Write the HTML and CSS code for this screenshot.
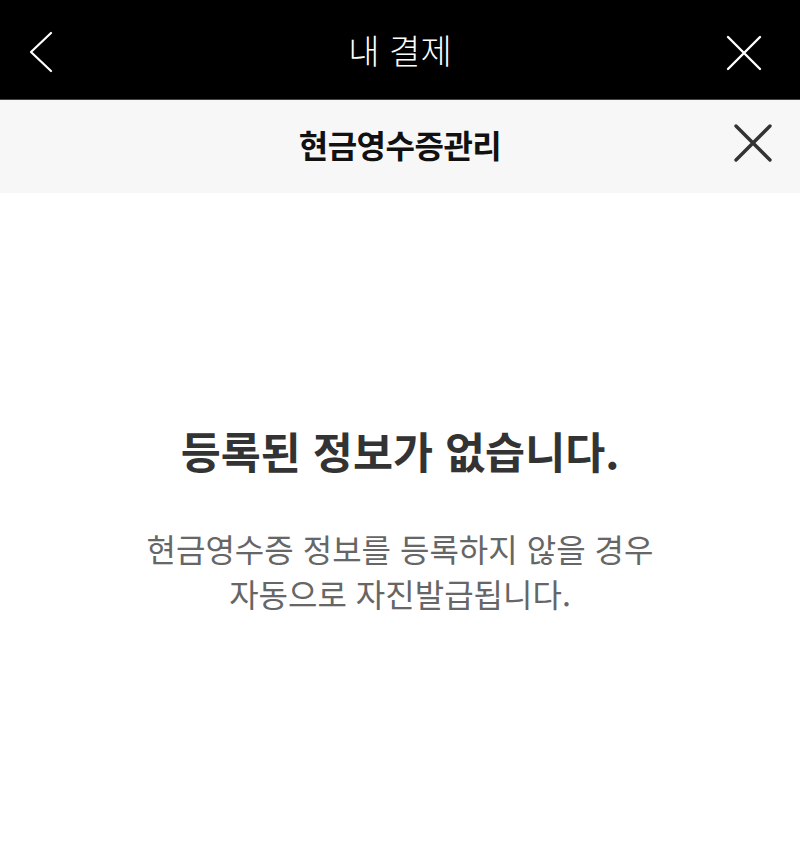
FILE: index.html
```html
<!DOCTYPE html>
<html lang="ko">
<head>
  <meta charset="UTF-8">
  <meta name="viewport" content="width=device-width, initial-scale=1.0">
  <title>내 결제</title>
  <link rel="stylesheet" href="styles.css">
</head>
<body>
  <header class="top-bar">
    <button class="icon-btn back-btn" aria-label="뒤로">
      <svg width="40" height="50" viewBox="0 0 40 50">
        <polyline points="21,4 1,23 21,42" fill="none" stroke="#fff" stroke-width="2.2" stroke-linecap="round" stroke-linejoin="round"/>
      </svg>
    </button>
    <h1 class="top-title">내 결제</h1>
    <button class="icon-btn close-btn" aria-label="닫기">
      <svg width="40" height="40" viewBox="0 0 40 40">
        <path d="M4 4 L36 36 M36 4 L4 36" fill="none" stroke="#fff" stroke-width="2.4" stroke-linecap="round"/>
      </svg>
    </button>
  </header>

  <div class="sub-bar">
    <h2 class="sub-title">현금영수증관리</h2>
    <button class="icon-btn sub-close" aria-label="닫기">
      <svg width="40" height="40" viewBox="0 0 40 40">
        <path d="M3 3 L37 37 M37 3 L3 37" fill="none" stroke="#333" stroke-width="3.4" stroke-linecap="round"/>
      </svg>
    </button>
  </div>

  <main class="empty-state">
    <p class="empty-title">등록된 정보가 없습니다.</p>
    <p class="empty-desc">현금영수증 정보를 등록하지 않을 경우<br>자동으로 자진발급됩니다.</p>
  </main>
</body>
</html>
```

FILE: styles.css
```css
body {
  margin: 0;
  padding: 0;
  font-family: "Noto Sans CJK KR", "Noto Sans", sans-serif;
  background-color: #fff;
  color: #333;
}
.icon-btn {
  background: none;
  border: none;
  padding: 0;
  cursor: pointer;
  display: flex;
  align-items: center;
  justify-content: center;
}
/* Top bar */
.top-bar {
  position: relative;
  height: 99px;
  background-color: #000;
  border-bottom: 1px solid #444;
  display: flex;
  align-items: center;
  justify-content: center;
}
.top-title {
  margin: 0;
  color: #fff;
  font-size: 34px;
  font-weight: 300;
}
.back-btn {
  position: absolute;
  left: 30px;
  top: 29px;
}
.close-btn {
  position: absolute;
  right: 36px;
  top: 33px;
}
/* Sub bar */
.sub-bar {
  position: relative;
  height: 93px;
  box-sizing: border-box;
  padding-bottom: 6px;
  background-color: #f7f7f7;
  display: flex;
  align-items: center;
  justify-content: center;
}
.sub-title {
  margin: 0;
  font-size: 32px;
  font-weight: 700;
  letter-spacing: -0.5px;
  color: #111;
}
.sub-close {
  position: absolute;
  right: 27px;
  top: 23px;
}
/* Empty state */
.empty-state {
  padding-top: 232px;
  text-align: center;
}
.empty-title {
  margin: 0;
  font-size: 43.5px;
  font-weight: 700;
  line-height: 1.2;
  color: #333;
}
.empty-desc {
  margin: 49px 0 0;
  font-size: 32px;
  line-height: 45px;
  color: #666;
}
```
